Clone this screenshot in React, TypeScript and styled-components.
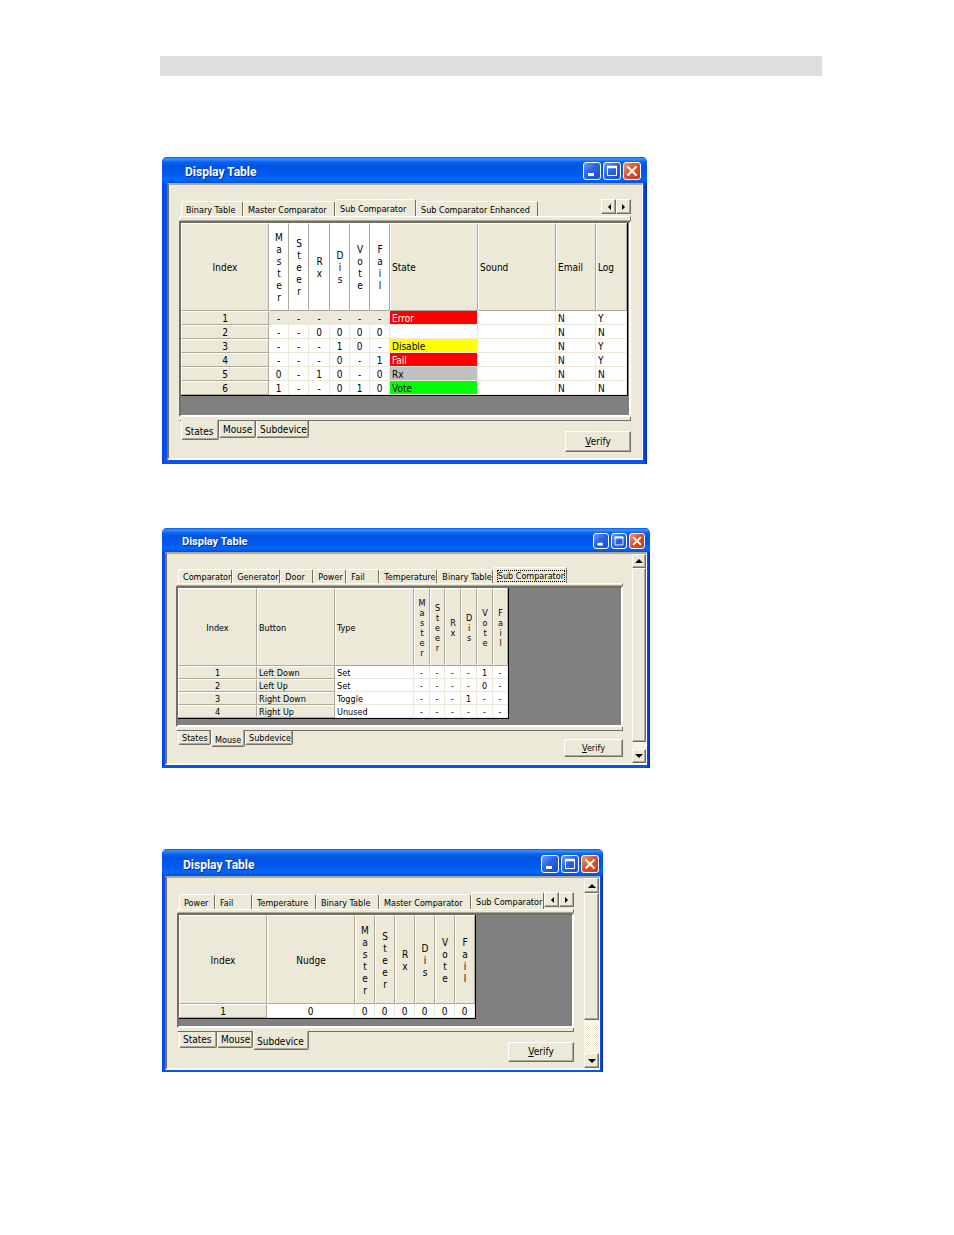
import React from 'react';
import styled, { createGlobalStyle, css, ThemeProvider } from 'styled-components';

interface Metrics {
  width: number;
  frameLeft: number;
  frameRight: number;
  frameBottom: number;
  titleHeight: number;
  titleSize: number;
  titleIndent: number;
  captionSize: number;
  captionEnd: number;
  clientTop: number;
  clientLeft: number;
  clientRight: number;
  clientBottom: number;
  tabHeight: number;
  barHeight: number;
  wellHeight: number;
  font: number;
  line: number;
  headerHeight: number;
  rowHeight: number;
  bottomTabHeight: number;
  verifyWidth: number;
  verifyHeight: number;
  verifyTop: number;
  scrollWidth: number;
}

declare module 'styled-components' {
  export interface DefaultTheme extends Metrics {}
}

const face = '#ece9d8';
const shade = '#aca899';
const dark = '#716f64';

const GlobalStyle = createGlobalStyle`
  * { box-sizing: border-box; }
  body { margin: 0; background: #fff; }
  button { font: inherit; color: inherit; padding: 0; margin: 0; border-radius: 0; }
`;

const Page = styled.main`
  padding: 56px 132px 160px 160px;
  font-family: 'DejaVu Sans Condensed', 'DejaVu Sans', sans-serif;
  color: #000;
`;

const HeaderRule = styled.header`
  height: 20px;
  background: #dedede;
`;

const Figure = styled.section<{ $gap: number }>`
  margin: ${(p) => p.$gap}px 0 0 2px;
`;

const Frame = styled.div`
  width: 100%;
  max-width: ${(p) => p.theme.width}px;
  background: linear-gradient(90deg, #0a3fe0, #0855ee 3px, #0855ee calc(100% - 3px), #0026b0);
  border-radius: 5px 5px 0 0;
  overflow: hidden;
  padding: 0 ${(p) => p.theme.frameRight}px ${(p) => p.theme.frameBottom}px ${(p) => p.theme.frameLeft}px;
  font-size: ${(p) => p.theme.font}px;
  line-height: ${(p) => p.theme.line}px;
`;

const TitleBar = styled.div`
  display: flex;
  align-items: center;
  gap: 2px;
  height: ${(p) => p.theme.titleHeight}px;
  margin: 0 -${(p) => p.theme.frameRight}px 0 -${(p) => p.theme.frameLeft}px;
  padding: 2px ${(p) => p.theme.captionEnd}px 0 ${(p) => p.theme.titleIndent}px;
  background: linear-gradient(180deg, #0a5be8 0, #3a93ff 2px, #0a62f0 5px, #0054e3 9px, #0058ec 60%, #0268fd 85%, #0050dc 100%);
`;

const Title = styled.h2`
  flex: 1;
  margin: 0;
  padding-top: 2px;
  color: #fff;
  font: bold ${(p) => p.theme.titleSize}px/16px Roboto, sans-serif;
  text-shadow: 1px 1px 0 #0a2f94;
`;

const CaptionButton = styled.button<{ $close?: boolean }>`
  display: grid;
  width: ${(p) => p.theme.captionSize}px;
  height: ${(p) => p.theme.captionSize}px;
  border: 1px solid #fff;
  border-radius: 3px;
  background: ${(p) =>
    p.$close
      ? 'linear-gradient(135deg, #f0997c, #e2512a 45%, #c43a12)'
      : 'linear-gradient(135deg, #6d9bf8, #2a62e6 45%, #1a4cd0)'};
  svg { width: 100%; height: 100%; }
`;

const Body = styled.div`
  display: flex;
  background: ${face};
  border: 1px solid;
  border-width: 2px 1px 2px 2px;
  border-color: ${shade} #fff #fff ${dark};
`;

const Client = styled.div`
  flex: 1;
  min-width: 0;
  padding: ${(p) => p.theme.clientTop}px ${(p) => p.theme.clientRight}px ${(p) => p.theme.clientBottom}px
    ${(p) => p.theme.clientLeft}px;
`;

const TabStrip = styled.div`
  display: flex;
  align-items: flex-end;
  height: ${(p) => p.theme.tabHeight}px;
  padding-left: 2px;
`;

const TabList = styled.div`
  display: flex;
  flex: 1;
  min-width: 0;
  align-items: flex-end;
  overflow: hidden;
`;

const Tab = styled.button<{ $width: number; $on?: boolean }>`
  flex: 0 0 ${(p) => p.$width}px;
  height: ${(p) => p.theme.tabHeight - (p.$on ? 0 : 2)}px;
  padding: 1px 0 0 4px;
  font-size: 9px;
  text-align: left;
  white-space: nowrap;
  background: ${face};
  border: 1px solid;
  border-width: 1px 1px 0 1px;
  border-color: #fff ${dark} transparent #fff;
  border-radius: 2px 2px 0 0;
`;

const LastTab = styled(Tab)`
  flex-shrink: 1;
`;

const TabLabel = styled.span<{ $focus?: boolean }>`
  ${(p) =>
    p.$focus &&
    css`
      outline: 1px dotted #000;
      outline-offset: 0;
    `}
`;

const Spinner = styled.div`
  display: flex;
  align-self: flex-start;
`;

const raised = css`
  background: ${face};
  border: 1px solid;
  border-color: #fff ${dark} ${dark} #fff;
  box-shadow: inset -1px -1px 0 ${shade};
`;

const ArrowButton = styled.button<{ $size: number }>`
  ${raised}
  display: grid;
  place-items: center;
  flex: none;
  width: ${(p) => p.$size}px;
  height: ${(p) => p.$size}px;
`;

const PaneBar = styled.div<{ $lower?: boolean }>`
  height: ${(p) => (p.$lower ? 4 : p.theme.barHeight)}px;
  background: ${face};
  border: 1px solid;
  border-color: #fff ${dark} ${(p) => (p.$lower ? dark : shade)} #fff;
  border-top-width: ${(p) => (p.$lower ? 0 : 1)}px;
`;

const Well = styled.div`
  min-height: ${(p) => p.theme.wellHeight}px;
  background: #808080;
  border: 2px solid;
  border-color: ${dark} #fff #fff ${dark};
`;

const Grid = styled.table`
  table-layout: fixed;
  width: 0;
  border-collapse: separate;
  border-spacing: 0;
  border-right: 1px solid #000;
  border-bottom: 1px solid #000;
`;

type Align = 'left' | 'center';

const HeadCell = styled.th<{ $align: Align; $light?: boolean }>`
  height: ${(p) => p.theme.headerHeight}px;
  padding: 2px 1px 0;
  font-weight: normal;
  text-align: ${(p) => p.$align};
  background: ${(p) => (p.$light ? '#fff' : face)};
  border: 1px solid;
  border-color: #fff ${shade} ${shade} #fff;
`;

const FixedCell = styled.th<{ $align: Align }>`
  height: ${(p) => p.theme.rowHeight}px;
  padding: 1px 1px 0;
  font-weight: normal;
  line-height: 10px;
  text-align: ${(p) => p.$align};
  background: ${face};
  border: 1px solid;
  border-color: #fff ${shade} ${shade} #fff;
`;

const DataCell = styled.td<{ $align: Align; $fill?: string; $ink?: string }>`
  height: ${(p) => p.theme.rowHeight}px;
  padding: 2px 2px 0;
  line-height: 10px;
  text-align: ${(p) => p.$align};
  white-space: nowrap;
  color: ${(p) => p.$ink || '#000'};
  background: ${(p) => p.$fill || '#fff'};
  border: 0 solid ${face};
  border-width: 0 1px 1px 0;
`;

const Letter = styled.span`
  display: block;
  text-align: center;
`;

const Footer = styled.div`
  display: flex;
  align-items: flex-start;
  justify-content: space-between;
`;

const LowerTabs = styled.div`
  display: flex;
  align-items: flex-start;
  padding-left: 2px;
`;

const LowerTab = styled.button<{ $width: number; $on?: boolean }>`
  width: ${(p) => p.$width}px;
  height: ${(p) => p.theme.bottomTabHeight + (p.$on ? 3 : 0)}px;
  margin-top: ${(p) => (p.$on ? -1 : 0)}px;
  padding: ${(p) => (p.$on ? 4 : 1)}px 0 0 3px;
  text-align: left;
  white-space: nowrap;
  background: ${face};
  border: 1px solid;
  border-width: 0 1px 1px 1px;
  border-color: transparent ${dark} ${dark} #fff;
  border-radius: 0 0 2px 2px;
  box-shadow: inset -1px -1px 0 ${shade};
`;

const VerifyButton = styled.button`
  ${raised}
  width: ${(p) => p.theme.verifyWidth}px;
  height: ${(p) => p.theme.verifyHeight}px;
  margin-top: ${(p) => p.theme.verifyTop}px;
`;

const ScrollBar = styled.div`
  display: flex;
  flex-direction: column;
  flex: 0 0 ${(p) => p.theme.scrollWidth}px;
  background: repeating-conic-gradient(#fff 0 25%, ${face} 0 50%) 0 0 / 2px 2px;
`;

const Thumb = styled.div<{ $share: number }>`
  ${raised}
  flex: ${(p) => p.$share} 0 0;
`;

const Rest = styled.div<{ $share: number }>`
  flex: ${(p) => p.$share} 0 0;
`;

const arrows = {
  left: 'M6 1 L3 4 L6 7 Z',
  right: 'M2 1 L5 4 L2 7 Z',
  up: 'M0 6 L4 2 L8 6 Z',
  down: 'M0 2 L4 6 L8 2 Z',
};

function Arrow({ dir }: { dir: keyof typeof arrows }) {
  return (
    <svg width="8" height="8" viewBox="0 0 8 8" aria-hidden="true">
      <path d={arrows[dir]} fill="#000" />
    </svg>
  );
}

function Captions() {
  return (
    <>
      <CaptionButton aria-label="Minimize">
        <svg viewBox="0 0 16 16"><path d="M4 11.5h6" stroke="#fff" strokeWidth="3" /></svg>
      </CaptionButton>
      <CaptionButton aria-label="Maximize">
        <svg viewBox="0 0 16 16">
          <path d="M3.5 3.5h9v9h-9z" fill="none" stroke="#fff" />
          <path d="M3 4h10" stroke="#fff" strokeWidth="2.4" />
        </svg>
      </CaptionButton>
      <CaptionButton $close aria-label="Close">
        <svg viewBox="0 0 16 16"><path d="M3.5 3.5l9 9M12.5 3.5l-9 9" stroke="#fff" strokeWidth="2.2" /></svg>
      </CaptionButton>
    </>
  );
}

interface TabSpec { label: string; width: number }

interface Column {
  label: string;
  width: number;
  align?: Align;
  stacked?: boolean;
  light?: boolean;
  fixed?: boolean;
}

interface Cell { text: string; fill?: string; ink?: string }

interface WindowSpec {
  metrics: Metrics;
  gap: number;
  tabs: TabSpec[];
  activeTab: number;
  focusRing?: boolean;
  spinner?: boolean;
  columns: Column[];
  rows: (string | Cell)[][];
  lowerTabs: TabSpec[];
  activeLower: number;
  scroll?: [number, number];
}

const flagNames = ['Master', 'Steer', 'Rx', 'Dis', 'Vote', 'Fail'];
const flags = (widths: number[], light = false): Column[] =>
  flagNames.map((label, i) => ({ label, width: widths[i], stacked: true, light }));

const muted = (text: string): Cell => ({ text, fill: face });

const windows: WindowSpec[] = [
  {
    gap: 81,
    metrics: {
      width: 485, frameLeft: 5, frameRight: 4, frameBottom: 4, titleHeight: 26, titleSize: 12, titleIndent: 23,
      captionSize: 18, captionEnd: 6, clientTop: 14, clientLeft: 10, clientRight: 11, clientBottom: 6,
      tabHeight: 17, barHeight: 5, wellHeight: 196, font: 10, line: 12, headerHeight: 88, rowHeight: 14,
      bottomTabHeight: 17, verifyWidth: 66, verifyHeight: 21, verifyTop: 10, scrollWidth: 0,
    },
    tabs: [
      { label: 'Binary Table', width: 62 },
      { label: 'Master Comparator', width: 92 },
      { label: 'Sub Comparator', width: 81 },
      { label: 'Sub Comparator Enhanced', width: 122 },
    ],
    activeTab: 2,
    spinner: true,
    columns: [
      { label: 'Index', width: 88, fixed: true },
      ...flags([20, 20, 21, 20, 20, 20], true),
      { label: 'State', width: 88, align: 'left' },
      { label: 'Sound', width: 78, align: 'left' },
      { label: 'Email', width: 40, align: 'left' },
      { label: 'Log', width: 31, align: 'left' },
    ],
    rows: [
      ['1', muted('-'), muted('-'), muted('-'), muted('-'), muted('-'), muted('-'), { text: 'Error', fill: '#f00', ink: '#fff' }, '', 'N', 'Y'],
      ['2', '-', '-', '0', '0', '0', '0', '', '', 'N', 'N'],
      ['3', '-', '-', '-', '1', '0', '-', { text: 'Disable', fill: '#ff0' }, '', 'N', 'Y'],
      ['4', '-', '-', '-', '0', '-', '1', { text: 'Fail', fill: '#f00', ink: '#fff' }, '', 'N', 'Y'],
      ['5', '0', '-', '1', '0', '-', '0', { text: 'Rx', fill: '#c0c0c0' }, '', 'N', 'N'],
      ['6', '1', '-', '-', '0', '1', '0', { text: 'Vote', fill: '#0f0' }, '', 'N', 'N'],
    ],
    lowerTabs: [
      { label: 'States', width: 38 },
      { label: 'Mouse', width: 37 },
      { label: 'Subdevice', width: 53 },
    ],
    activeLower: 0,
  },
  {
    gap: 64,
    metrics: {
      width: 488, frameLeft: 3, frameRight: 3, frameBottom: 3, titleHeight: 24, titleSize: 11, titleIndent: 20,
      captionSize: 16, captionEnd: 5, clientTop: 13, clientLeft: 9, clientRight: 9, clientBottom: 6,
      tabHeight: 16, barHeight: 3, wellHeight: 141, font: 9, line: 10, headerHeight: 78, rowHeight: 13,
      bottomTabHeight: 14, verifyWidth: 59, verifyHeight: 18, verifyTop: 8, scrollWidth: 14,
    },
    tabs: [
      { label: 'Comparator', width: 54 },
      { label: 'Generator', width: 48 },
      { label: 'Door', width: 33 },
      { label: 'Power', width: 33 },
      { label: 'Fail', width: 33 },
      { label: 'Temperature', width: 58 },
      { label: 'Binary Table', width: 55 },
      { label: 'Sub Comparator', width: 74 },
    ],
    activeTab: 7,
    focusRing: true,
    columns: [
      { label: 'Index', width: 79, fixed: true },
      { label: 'Button', width: 78, align: 'left', fixed: true },
      { label: 'Type', width: 79, align: 'left' },
      ...flags([16, 15, 16, 16, 16, 15]),
    ],
    rows: [
      ['1', 'Left Down', 'Set', '-', '-', '-', '-', '1', '-'],
      ['2', 'Left Up', 'Set', '-', '-', '-', '-', '0', '-'],
      ['3', 'Right Down', 'Toggle', '-', '-', '-', '1', '-', '-'],
      ['4', 'Right Up', 'Unused', '-', '-', '-', '-', '-', '-'],
    ],
    lowerTabs: [
      { label: 'States', width: 33 },
      { label: 'Mouse', width: 34 },
      { label: 'Subdevice', width: 48 },
    ],
    activeLower: 1,
    scroll: [176, 7],
  },
  {
    gap: 81,
    metrics: {
      width: 441, frameLeft: 3, frameRight: 3, frameBottom: 2, titleHeight: 27, titleSize: 12, titleIndent: 21,
      captionSize: 18, captionEnd: 4, clientTop: 14, clientLeft: 10, clientRight: 10, clientBottom: 6,
      tabHeight: 17, barHeight: 4, wellHeight: 115, font: 10, line: 12, headerHeight: 89, rowHeight: 14,
      bottomTabHeight: 16, verifyWidth: 66, verifyHeight: 20, verifyTop: 10, scrollWidth: 15,
    },
    tabs: [
      { label: 'Power', width: 36 },
      { label: 'Fail', width: 37 },
      { label: 'Temperature', width: 64 },
      { label: 'Binary Table', width: 63 },
      { label: 'Master Comparator', width: 92 },
      { label: 'Sub Comparator', width: 84 },
    ],
    activeTab: 5,
    spinner: true,
    columns: [
      { label: 'Index', width: 88, fixed: true },
      { label: 'Nudge', width: 88 },
      ...flags([20, 20, 20, 20, 20, 20]),
    ],
    rows: [['1', '0', '0', '0', '0', '0', '0', '0']],
    lowerTabs: [
      { label: 'States', width: 38 },
      { label: 'Mouse', width: 36 },
      { label: 'Subdevice', width: 56 },
    ],
    activeLower: 2,
    scroll: [127, 34],
  },
];

function DisplayTable({ spec }: { spec: WindowSpec }) {
  const { metrics, columns } = spec;
  return (
    <ThemeProvider theme={metrics}>
      <Figure $gap={spec.gap}>
        <Frame>
          <TitleBar>
            <Title>Display Table</Title>
            <Captions />
          </TitleBar>
          <Body>
            <Client>
              <TabStrip>
                <TabList role="tablist">
                  {spec.tabs.map((t, i) => {
                    const on = i === spec.activeTab;
                    const Part = i === spec.tabs.length - 1 ? LastTab : Tab;
                    return (
                      <Part key={t.label} role="tab" aria-selected={on} $width={t.width} $on={on}>
                        <TabLabel $focus={spec.focusRing && on}>{t.label}</TabLabel>
                      </Part>
                    );
                  })}
                </TabList>
                {spec.spinner && (
                  <Spinner>
                    <ArrowButton $size={15} aria-label="Previous tabs"><Arrow dir="left" /></ArrowButton>
                    <ArrowButton $size={15} aria-label="Next tabs"><Arrow dir="right" /></ArrowButton>
                  </Spinner>
                )}
              </TabStrip>
              <PaneBar />
              <Well>
                <Grid>
                  <colgroup>
                    {columns.map((c) => <col key={c.label} width={c.width} />)}
                  </colgroup>
                  <thead>
                    <tr>
                      {columns.map((c) => (
                        <HeadCell key={c.label} scope="col" $align={c.align || 'center'} $light={c.light}>
                          {c.stacked ? [...c.label].map((ch, i) => <Letter key={i}>{ch}</Letter>) : c.label}
                        </HeadCell>
                      ))}
                    </tr>
                  </thead>
                  <tbody>
                    {spec.rows.map((row, r) => (
                      <tr key={r}>
                        {row.map((value, c) => {
                          const cell: Cell = typeof value === 'string' ? { text: value } : value;
                          const align = columns[c].align || 'center';
                          return columns[c].fixed ? (
                            <FixedCell key={c} scope="row" $align={align}>{cell.text}</FixedCell>
                          ) : (
                            <DataCell key={c} $align={align} $fill={cell.fill} $ink={cell.ink}>{cell.text}</DataCell>
                          );
                        })}
                      </tr>
                    ))}
                  </tbody>
                </Grid>
              </Well>
              <PaneBar $lower />
              <Footer>
                <LowerTabs role="tablist">
                  {spec.lowerTabs.map((t, i) => (
                    <LowerTab key={t.label} role="tab" aria-selected={i === spec.activeLower} $width={t.width} $on={i === spec.activeLower}>
                      {t.label}
                    </LowerTab>
                  ))}
                </LowerTabs>
                <VerifyButton><u>V</u>erify</VerifyButton>
              </Footer>
            </Client>
            {spec.scroll && (
              <ScrollBar>
                <ArrowButton $size={metrics.scrollWidth} aria-label="Scroll up"><Arrow dir="up" /></ArrowButton>
                <Thumb $share={spec.scroll[0]} />
                <Rest $share={spec.scroll[1]} />
                <ArrowButton $size={metrics.scrollWidth} aria-label="Scroll down"><Arrow dir="down" /></ArrowButton>
              </ScrollBar>
            )}
          </Body>
        </Frame>
      </Figure>
    </ThemeProvider>
  );
}

export default function App() {
  return (
    <>
      <GlobalStyle />
      <Page>
        <HeaderRule />
        {windows.map((spec, i) => <DisplayTable key={i} spec={spec} />)}
      </Page>
    </>
  );
}
